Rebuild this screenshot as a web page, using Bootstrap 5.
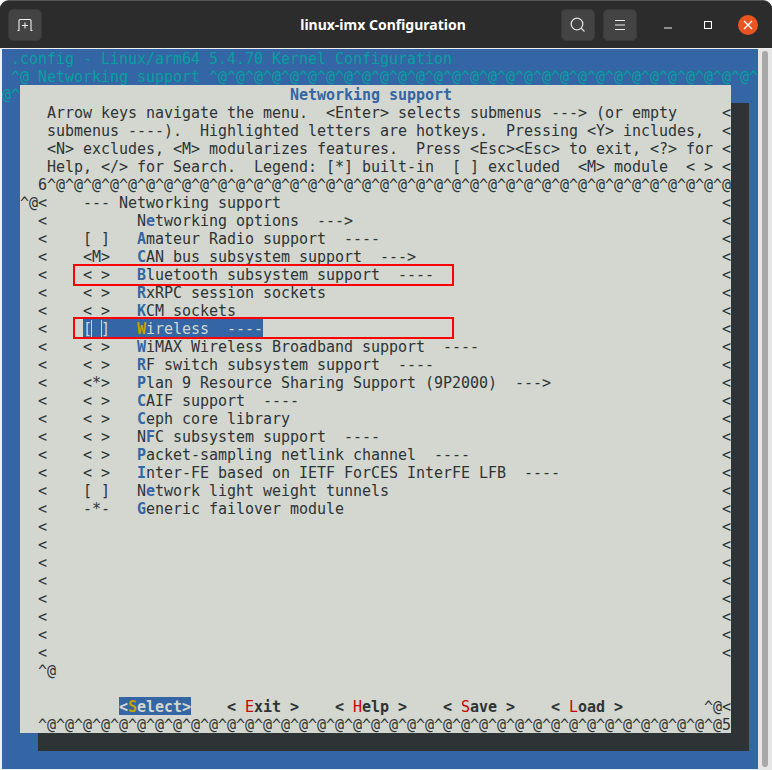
<!doctype html>
<html lang="en">
<head>
<meta charset="utf-8">
<title>linux-imx Configuration</title>
<link rel="stylesheet" href="https://cdn.jsdelivr.net/npm/bootstrap@5.3.0/dist/css/bootstrap.min.css">
<style>
html,body{height:770px;overflow:hidden;background:#fff}
.win{width:772px;height:770px;background:#2c2c2c;border-radius:9px 9px 0 0;overflow:hidden;border-top:1px solid #555}
.hdr{height:47px;background:#2c2c2c;color:#fff;font:700 14px "Noto Sans","Open Sans",sans-serif;padding:0 14px 0 8px}
.hside{flex:1 1 0}
.hbtn{width:34px;height:32px;background:#434343;border-radius:5px;border:1px solid #3a3a3a}
.gap-min{margin-left:27px}
.gap-max{margin-left:32px}
.gap-close{margin-left:26px}
.closeb{width:20px;height:20px;background:#e95420}
.wbody{height:722px;background:#f0f0ee;padding:1px 0 0 2px}
.term{width:756px;height:720px;background:#3465a4;font:15px/18px "DejaVu Sans Mono",monospace;letter-spacing:-.0312px;color:#2e3436;position:relative}
.term pre{margin:0;font:inherit;letter-spacing:inherit;overflow:hidden;white-space:pre;padding-top:1px}
.bk{color:#07a0a0;font-weight:700;height:36px;width:756px}
.bks{width:18px;height:18px;color:#07a0a0;font-weight:700}
.dlg{width:711px;height:648px;background:#d3d7cf;box-shadow:18px 18px 0 #2e3436}
.ttl{color:#3465a4;font-weight:700}
.hk{color:#3465a4;font-weight:700}
.sel{display:inline-block;height:18px;margin-top:-1px;padding-top:1px;vertical-align:top;background:#3465a4;color:#d3d7cf}
.sel b{color:#c4a000}
.curs{box-shadow:-1px 0 0 #cfd6dc,1px 0 0 #cfd6dc}
.kb{font-weight:700}
.kb i{font-style:normal;color:#c00;font-weight:400}
.sb{width:14px;background:#e6e6e6}
.thumb{width:6px;height:716px;background:#a8a8a8;border-radius:3px;margin:2px 0 0 4px}
.redbox{position:absolute;left:71px;width:381px;height:22px;border:2px solid #f00}
.rb1{top:215px}
.rb2{top:268px}
</style>
</head>
<body>
<div class="win">
 <div class="hdr d-flex align-items-center">
  <div class="hside d-flex">
   <div class="hbtn d-flex align-items-center justify-content-center"><svg width="16" height="16" viewBox="0 0 16 16" fill="none" stroke="#eee" stroke-width="1.1"><path d="M.5 13.5H2V3.5a1 1 0 0 1 1-1h10a1 1 0 0 1 1 1v10h1.500M8 5.500v6M5 8.500h6"/></svg></div>
  </div>
  <div class="text-center">linux-imx Configuration</div>
  <div class="hside d-flex align-items-center justify-content-end">
   <div class="hbtn d-flex align-items-center justify-content-center me-2"><svg width="16" height="16" viewBox="0 0 16 16" fill="none" stroke="#ddd" stroke-width="1.3"><circle cx="7" cy="7" r="5.800"/><path d="M11 11l3.500 3.500"/></svg></div>
   <div class="hbtn d-flex align-items-center justify-content-center"><svg width="10" height="10" viewBox="0 0 10 10" stroke="#eee"><path d="M0 .5h10M0 5h10M0 9.500h10"/></svg></div>
   <svg class="gap-min" width="8" height="8" viewBox="0 0 8 8" stroke="#eee" stroke-width="1.200"><path d="M0 7h8"/></svg>
   <svg class="gap-max" width="8" height="8" viewBox="0 0 8 8" fill="none" stroke="#fff" stroke-width="1.100"><rect x=".5" y=".5" width="7" height="7"/></svg>
   <div class="gap-close closeb rounded-circle d-flex align-items-center justify-content-center"><svg width="10" height="10" viewBox="0 0 10 10" stroke="#fff" stroke-width="1.400"><path d="M1 1l8 8M9 1l-8 8"/></svg></div>
  </div>
 </div>
 <div class="wbody d-flex">
  <div class="term">
<pre class="bk"> .config - Linux/arm64 5.4.70 Kernel Configuration
 ^@ Networking support ^@^@^@^@^@^@^@^@^@^@^@^@^@^@^@^@^@^@^@^@^@^@^@^@^@^@^@^@^@^@^</pre>
   <div class="d-flex">
    <pre class="bks">@^</pre>
    <pre class="dlg">                              <span class="ttl">Networking support</span>
   Arrow keys navigate the menu.  &lt;Enter&gt; selects submenus ---&gt; (or empty     &lt;
   submenus ----).  Highlighted letters are hotkeys.  Pressing &lt;Y&gt; includes,  &lt;
   &lt;N&gt; excludes, &lt;M&gt; modularizes features.  Press &lt;Esc&gt;&lt;Esc&gt; to exit, &lt;?&gt; for &lt;
   Help, &lt;/&gt; for Search.  Legend: [*] built-in  [ ] excluded  &lt;M&gt; module  &lt; &gt; &lt;
  6^@^@^@^@^@^@^@^@^@^@^@^@^@^@^@^@^@^@^@^@^@^@^@^@^@^@^@^@^@^@^@^@^@^@^@^@^@^@
^@&lt;    --- Networking support                                                 &lt;
  &lt;          N<span class="hk">e</span>tworking options  ---&gt;                                         &lt;
  &lt;    [ ]   <span class="hk">A</span>mateur Radio support  ----                                      &lt;
  &lt;    &lt;M&gt;   <span class="hk">C</span>AN bus subsystem support  ---&gt;                                  &lt;
  &lt;    &lt; &gt;   <span class="hk">B</span>luetooth subsystem support  ----                                &lt;
  &lt;    &lt; &gt;   <span class="hk">R</span>xRPC session sockets                                            &lt;
  &lt;    &lt; &gt;   <span class="hk">K</span>CM sockets                                                      &lt;
  &lt;    <span class="sel">[<span class="curs"> </span>]   <b>W</b>ireless  ----</span>                                                   &lt;
  &lt;    &lt; &gt;   <span class="hk">W</span>iMAX Wireless Broadband support  ----                           &lt;
  &lt;    &lt; &gt;   <span class="hk">R</span>F switch subsystem support  ----                                &lt;
  &lt;    &lt;*&gt;   <span class="hk">P</span>lan 9 Resource Sharing Support (9P2000)  ---&gt;                   &lt;
  &lt;    &lt; &gt;   <span class="hk">C</span>AIF support  ----                                               &lt;
  &lt;    &lt; &gt;   <span class="hk">C</span>eph core library                                                &lt;
  &lt;    &lt; &gt;   N<span class="hk">F</span>C subsystem support  ----                                      &lt;
  &lt;    &lt; &gt;   <span class="hk">P</span>acket-sampling netlink channel  ----                            &lt;
  &lt;    &lt; &gt;   <span class="hk">I</span>nter-FE based on IETF ForCES InterFE LFB  ----                  &lt;
  &lt;    [ ]   N<span class="hk">e</span>twork light weight tunnels                                     &lt;
  &lt;    -*-   <span class="hk">G</span>eneric failover module                                          &lt;
  &lt;                                                                           &lt;
  &lt;                                                                           &lt;
  &lt;                                                                           &lt;
  &lt;                                                                           &lt;
  &lt;                                                                           &lt;
  &lt;                                                                           &lt;
  &lt;                                                                           &lt;
  &lt;                                                                           &lt;
  ^@

           <span class="sel kb">&lt;<b>S</b>elect&gt;</span>    <span class="kb">&lt; <i>E</i>xit &gt;</span>    <span class="kb">&lt; <i>H</i>elp &gt;</span>    <span class="kb">&lt; <i>S</i>ave &gt;</span>    <span class="kb">&lt; <i>L</i>oad &gt;</span>         ^@&lt;
  ^@^@^@^@^@^@^@^@^@^@^@^@^@^@^@^@^@^@^@^@^@^@^@^@^@^@^@^@^@^@^@^@^@^@^@^@^@^@5</pre>
   </div>
   <div class="redbox rb1"></div>
   <div class="redbox rb2"></div>
  </div>
  <div class="sb"><div class="thumb"></div></div>
 </div>
</div>
</body>
</html>
